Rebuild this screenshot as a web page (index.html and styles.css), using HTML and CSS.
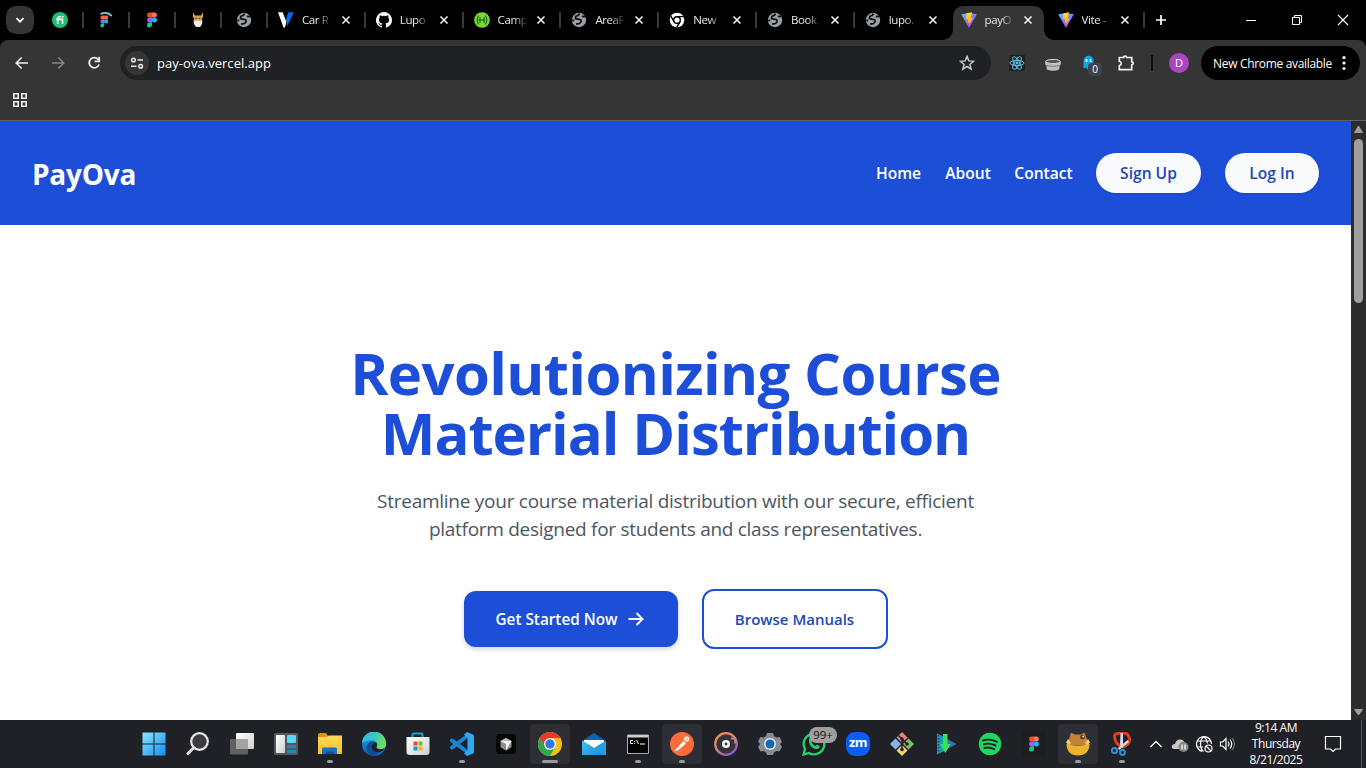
FILE: index.html
```html
<!DOCTYPE html>
<html lang="en">
<head>
<meta charset="utf-8">
<title>payOva</title>
<link rel="stylesheet" href="styles.css">
</head>
<body>
<svg class="defs" width="0" height="0">
  <defs>
    <linearGradient id="viteBody" x1="0" y1="0" x2="0.5" y2="1"><stop offset="0" stop-color="#41d1ff"/><stop offset="1" stop-color="#bd34fe"/></linearGradient>
    <linearGradient id="viteBolt" x1="0" y1="0" x2="0" y2="1"><stop offset="0" stop-color="#ffdd35"/><stop offset="1" stop-color="#ffa800"/></linearGradient>
    <linearGradient id="winBlue" x1="0" y1="0" x2="1" y2="1"><stop offset="0" stop-color="#8be4ff"/><stop offset="1" stop-color="#1190f0"/></linearGradient>
    <linearGradient id="whiteFade" x1="0" y1="0" x2="1" y2="1"><stop offset="0" stop-color="#fff"/><stop offset="1" stop-color="#cfcfcf"/></linearGradient>
    <linearGradient id="folder" x1="0" y1="0" x2="0" y2="1"><stop offset="0" stop-color="#ffd75e"/><stop offset="1" stop-color="#fbbd28"/></linearGradient>
    <linearGradient id="edgeTop" x1="0" y1="0" x2="1" y2="0.4"><stop offset="0" stop-color="#2fb5e8"/><stop offset="0.5" stop-color="#35c6c9"/><stop offset="1" stop-color="#67e05a"/></linearGradient>
    <linearGradient id="edgeLow" x1="0" y1="0" x2="0" y2="1"><stop offset="0" stop-color="#1fa0e5"/><stop offset="1" stop-color="#0b62bd"/></linearGradient>
    <linearGradient id="ring" x1="0" y1="0" x2="0.7" y2="1"><stop offset="0" stop-color="#f08a4a"/><stop offset="0.5" stop-color="#d68a78"/><stop offset="1" stop-color="#8a58d0"/></linearGradient>
    <linearGradient id="mail" x1="0" y1="0" x2="1" y2="1"><stop offset="0" stop-color="#43c4f5"/><stop offset="1" stop-color="#1a8ad6"/></linearGradient>
    <symbol id="globe" viewBox="0 0 16 16"><circle cx="8" cy="8" r="7.2" fill="#9aa0a6"/><path d="M8.600 1.600 7 3.600 4.800 4.300 4.500 6.500 8 7.300l1.800.5.300 2-1.600 1.700-3.500.6M1.200 8.300l2 .3M10.800 4.300l3.200.4" fill="none" stroke="#0c0c0c" stroke-width="1.700"/></symbol>
    <symbol id="vite" viewBox="0 0 16 16"><path d="M.2 2.2 8 .9l7.8 1.3L8 16Z" fill="url(#viteBody)"/><path d="M11 .2 5.4 1.3 5 7.5l2.2-.3L6.8 11l1.6-.5-.3 2.8L11.7 6l-2 .3Z" fill="url(#viteBolt)"/></symbol>
    <symbol id="figma" viewBox="0 0 16 16"><path d="M8 .5H5.6a2.5 2.5 0 0 0 0 5H8Z" fill="#f24e1e"/><path d="M8 .5h2.4a2.5 2.5 0 0 1 0 5H8Z" fill="#ff7262"/><path d="M8 5.5H5.6a2.5 2.5 0 0 0 0 5H8Z" fill="#a259ff"/><circle cx="10.4" cy="8" r="2.5" fill="#1abcfe"/><path d="M8 10.5H5.6A2.5 2.5 0 1 0 8 13Z" fill="#0acf83"/></symbol>
    <symbol id="close" viewBox="0 0 10 10"><path d="m1.5 1.5 7 7m0-7-7 7" stroke="#f1f1f1" stroke-width="1.6"/></symbol>
  </defs>
</svg>
<div class="screen">
  <div class="tabstrip">
    <div class="search-tabs"><svg width="10" height="10" viewBox="0 0 10 10"><path d="m1.5 3.2 3.5 3.5 3.5-3.500" fill="none" stroke="#fff" stroke-width="1.8"/></svg></div>
    <div class="pinned"><svg width="16" height="16" viewBox="0 0 16 16"><circle cx="8" cy="8" r="8" fill="#1dbf73"/><path d="M5.700 12V6.800Q5.700 4.700 7.700 4.700H9M4 7.400h6.500V12" fill="none" stroke="#fff" stroke-width="1.6"/><circle cx="10.6" cy="4.8" r="1" fill="#fff"/></svg></div>
    <div class="pinned"><svg width="16" height="16" viewBox="0 0 16 16"><path d="M2.500 2.200Q9-1.200 13.700 4" fill="none" stroke="#79cfd1" stroke-width="1.9"/><g transform="translate(0 3.200) scale(.78)"><path d="M8 .5H5.600a2.500 2.500 0 0 0 0 5H13V.5Z" fill="#f25f45"/><path d="M8 5.500H5.600a2.500 2.500 0 0 0 0 5H8Z" fill="#a259ff"/><circle cx="10.4" cy="8" r="2.5" fill="#1abcfe"/><path d="M8 10.500H5.600A2.500 2.500 0 1 0 8 13Z" fill="#0acf83"/></g></svg></div>
    <div class="pinned"><svg width="16" height="16"><use href="#figma"/></svg></div>
    <div class="pinned"><svg width="16" height="16" viewBox="0 0 16 16"><path d="M3.200.6 5 3.500h6L12.800.6l.4 4-1.300 2.200H4.100L2.800 4.600Z" fill="#d7a34e"/><path d="M4 5.500h8v5l-4 4-4-4Z" fill="#d9a45c"/><path d="M3.600 8.200 6 9.200l2-1 2 1 2.400-1-.3 3.800-2 3H6l-2-3Z" fill="#f1ece6"/><path d="M5.300 6.300h2m1.400 0h2" stroke="#3a2a1a"/></svg></div>
    <div class="pinned"><svg width="16" height="16"><use href="#globe"/></svg></div>
    <div class="tab"><svg width="16" height="16" viewBox="0 0 16 16"><path d="M0 .2h4.600l3.800 9.600L7 15.400H5.500Z" fill="#fff"/><path d="M10.400.2H16L9.200 14 7.800 8Z" fill="#0868e8"/></svg><span>Car R</span><svg class="x" width="10" height="10"><use href="#close"/></svg></div>
    <div class="tab"><svg width="16" height="16" viewBox="0 0 16 16"><path fill="#fff" d="M8 0a8 8 0 0 0-2.53 15.59c.4.07.55-.17.55-.38v-1.49c-2.23.48-2.7-.95-2.7-.95-.36-.92-.89-1.17-.89-1.17-.72-.5.06-.49.06-.49.8.06 1.23.83 1.23.83.71 1.21 1.87.86 2.33.66.07-.52.28-.87.5-1.07-1.77-.2-3.64-.88-3.64-3.95 0-.88.31-1.59.82-2.15-.08-.2-.36-1.02.08-2.12 0 0 .67-.22 2.2.82a7.7 7.7 0 0 1 4 0c1.53-1.04 2.2-.82 2.2-.82.44 1.1.16 1.92.08 2.12.51.56.82 1.27.82 2.15 0 3.080-1.870 3.750-3.650 3.950.29.25.54.73.54 1.48v2.2c0 .21.15.46.55.38A8 8 0 0 0 8 0Z"/></svg><span>Lupo</span><svg class="x" width="10" height="10"><use href="#close"/></svg></div>
    <div class="tab"><svg width="16" height="16" viewBox="0 0 16 16"><circle cx="8" cy="8" r="7.8" fill="#79dc34"/><path d="M4.500 3.500Q2 8 4.500 12.500M11.500 3.500Q14 8 11.500 12.500M6 5v6m4-6v6M4.500 8h7" fill="none" stroke="#1c5e13" stroke-width="1.1"/></svg><span>Camp</span><svg class="x" width="10" height="10"><use href="#close"/></svg></div>
    <div class="tab"><svg width="16" height="16"><use href="#globe"/></svg><span>AreaF</span><svg class="x" width="10" height="10"><use href="#close"/></svg></div>
    <div class="tab"><svg width="16" height="16" viewBox="0 0 16 16"><circle cx="8" cy="8" r="7.3" fill="#fff"/><circle cx="8" cy="8" r="3.3" fill="#fff" stroke="#000" stroke-width="1.4"/><path d="M8 4.600h6.600M5 9.600 1.800 4M11 9.800 7.700 15.400" stroke="#000" stroke-width="1.4"/></svg><span>New</span><svg class="x" width="10" height="10"><use href="#close"/></svg></div>
    <div class="tab"><svg width="16" height="16"><use href="#globe"/></svg><span>Book</span><svg class="x" width="10" height="10"><use href="#close"/></svg></div>
    <div class="tab last"><svg width="16" height="16"><use href="#globe"/></svg><span>lupo.</span><svg class="x" width="10" height="10"><use href="#close"/></svg></div>
    <div class="tab active"><svg width="16" height="16"><use href="#vite"/></svg><span>payO</span><svg class="x" width="10" height="10"><use href="#close"/></svg></div>
    <div class="tab after"><svg width="16" height="16"><use href="#vite"/></svg><span>Vite -</span><svg class="x" width="10" height="10"><use href="#close"/></svg></div>
    <svg class="newtab" width="12" height="12" viewBox="0 0 12 12"><path d="M6 1v10M1 6h10" stroke="#fff" stroke-width="1.7"/></svg>
    <div class="window-controls">
      <svg width="46" height="40" viewBox="0 0 46 40"><path d="M18 20.500h10" stroke="#fff"/></svg>
      <svg width="46" height="40" viewBox="0 0 46 40"><path d="M18.500 17.500h7v7h-7Zm2-.5v-1.500h7v7h-1.500" fill="none" stroke="#fff"/></svg>
      <svg width="46" height="40" viewBox="0 0 46 40"><path d="m18 15 10 10m0-10L18 25" stroke="#fff" stroke-width="1.1"/></svg>
    </div>
  </div>

  <div class="chrome">
    <div class="toolbar">
      <svg class="tool" width="36" height="34" viewBox="0 0 36 34"><path d="M24 17H12.500m5.200-5.500L12.200 17l5.500 5.500" fill="none" stroke="#f1f1f1" stroke-width="1.6"/></svg>
      <svg class="tool" width="36" height="34" viewBox="0 0 36 34"><path d="M12 17h11.500m-5.200-5.500 5.500 5.500-5.500 5.500" fill="none" stroke="#858585" stroke-width="1.6"/></svg>
      <svg class="tool" width="36" height="34" viewBox="0 0 36 34"><path d="M22.500 13.700a5.100 5.100 0 1 0 .6 4.800M23.200 10.800v4.600h-4.600" fill="none" stroke="#f1f1f1" stroke-width="1.8"/></svg>
      <div class="omnibox">
        <div class="site-info"><svg width="14" height="14" viewBox="0 0 14 14"><circle cx="3.5" cy="4" r="1.8" fill="none" stroke="#e8e8e8" stroke-width="1.5"/><path d="M7.500 4H13M1 10.200h5.500" stroke="#e8e8e8" stroke-width="1.6"/><circle cx="10.7" cy="10.2" r="1.8" fill="none" stroke="#e8e8e8" stroke-width="1.5"/></svg></div>
        <span class="url">pay-ova.vercel.app</span>
        <svg width="16" height="16" viewBox="0 0 16 16"><path d="m8 1.400 1.800 4.500 4.800.4-3.700 3.100 1.200 4.700L8 11.500l-4.100 2.600 1.200-4.700-3.700-3.100 4.800-.4Z" fill="none" stroke="#c7c7c7" stroke-width="1.5"/></svg>
      </div>
      <div class="extensions">
        <svg width="16" height="16" viewBox="0 0 16 16"><path fill="#202124" d="M0 0h16v16H0z"/><g fill="none" stroke="#5ec5df" stroke-width="1"><ellipse cx="8" cy="8" rx="7" ry="2.6"/><ellipse cx="8" cy="8" rx="7" ry="2.6" transform="rotate(60 8 8)"/><ellipse cx="8" cy="8" rx="7" ry="2.6" transform="rotate(120 8 8)"/></g><circle cx="8" cy="8" r="1.4" fill="#5ec5df"/></svg>
        <svg width="16" height="16" viewBox="0 0 16 16"><path d="M.2 6.500h15.600V9.500l-1.200 1-.4 4Q8 17 1.800 14.500l-.4-4-1.200-1Z" fill="#bdbdbd"/><ellipse cx="8" cy="6.500" rx="7.300" ry="2.100" fill="#555" stroke="#d2d2d2"/><path d="M1.500 10.500Q8 12.500 14.500 10.500" fill="none" stroke="#858585"/></svg>
        <div class="ghost"><svg width="16" height="16" viewBox="0 0 16 16"><path d="M2.500 13.600V6a5 5 0 0 1 10-.5V14l-3-1.500-3 2-1.500-2Z" fill="#0aa8ee"/><path d="M5.500 4v3m4-3v3" stroke="#fff" stroke-width="1.500"/></svg><span>0</span></div>
        <svg width="18" height="18" viewBox="0 0 18 18"><path d="M2.300 3.500h4.400a1.500 1.500 0 0 1 3 0h5v4.300a1.500 1.500 0 0 1 0 3v4.900H2.300v-3.900q2-.6 2-2.200t-2-2.300Z" fill="none" stroke="#f2f2f2" stroke-width="1.700"/></svg>
      </div>
      <i class="divider"></i>
      <div class="avatar">D</div>
      <div class="update"><span>New Chrome available</span><svg width="4" height="16" viewBox="0 0 4 16"><circle cx="2" cy="2.500" r="1.600" fill="#fff"/><circle cx="2" cy="8" r="1.600" fill="#fff"/><circle cx="2" cy="13.500" r="1.600" fill="#fff"/></svg></div>
    </div>
    <div class="bookmarks"><svg width="14" height="14" viewBox="0 0 14 14"><path d="M.8.8h4.400v4.400H.8Zm8 0h4.400v4.400H8.800Zm-8 8h4.400v4.400H.8Zm8 0h4.400v4.400H8.800Z" fill="none" stroke="#f1f1f1" stroke-width="1.600"/></svg></div>
  </div>

  <div class="viewport">
    <div class="page">
      <header class="site-header">
        <div class="brand"><span>PayOva</span></div>
        <nav>
          <a class="home">Home</a><a class="about">About</a><a class="contact">Contact</a><a class="pill signup">Sign Up</a><a class="pill login">Log In</a>
        </nav>
      </header>
      <main class="hero">
        <h1><span class="h-a">Revolutionizing Course</span><span class="h-b">Material Distribution</span></h1>
        <p><span class="p-a">Streamline your course material distribution with our secure, efficient</span><span class="p-b">platform designed for students and class representatives.</span></p>
        <div class="actions">
          <a class="primary"><span>Get Started Now</span><svg width="20" height="20" viewBox="0 0 20 20"><path d="M2.500 10h14M10.500 4l6 6-6 6" fill="none" stroke="#fff" stroke-width="2"/></svg></a>
          <a class="secondary">Browse Manuals</a>
        </div>
      </main>
    </div>
    <div class="scrollbar">
      <svg width="15" height="17" viewBox="0 0 15 17"><path d="M7.500 5 11.500 11.500h-8Z" fill="#9f9f9f" stroke="#9f9f9f" stroke-linejoin="round"/></svg>
      <i class="thumb"></i>
      <svg width="15" height="17" viewBox="0 0 15 17"><path d="M3.500 6.500h8L7.500 12Z" fill="#9f9f9f" stroke="#9f9f9f" stroke-linejoin="round"/></svg>
    </div>
  </div>

  <div class="taskbar">
    <div class="apps">
      <div class="app"><svg width="24" height="24" viewBox="0 0 24 24"><path d="M.5.500h11v11H.5Zm12 0h11v11h-11Zm-12 12h11v11H.5Zm12 0h11v11h-11Z" fill="url(#winBlue)"/></svg></div>
      <div class="app"><svg width="24" height="24" viewBox="0 0 24 24"><path d="M7 16.500 2 21.500" stroke="#ddd" stroke-width="3" stroke-linecap="round"/><circle cx="13.500" cy="9.500" r="8.300" fill="#3b3b40" stroke="#e7e7e7" stroke-width="2.200"/></svg></div>
      <div class="app"><svg width="24" height="24" viewBox="0 0 24 24"><rect x="6" y="1" width="18" height="16" rx="1" fill="url(#whiteFade)"/><rect y="7" width="18" height="15.500" rx="1" fill="#606062"/><path d="M6 7h12v10H6Z" fill="#a3a3a3"/></svg></div>
      <div class="app"><svg width="24" height="24" viewBox="0 0 24 24"><rect y="1" width="24" height="22" rx="1.500" fill="#56595c"/><rect x="2" y="3" width="9" height="18" rx="1" fill="url(#whiteFade)"/><rect x="13" y="3" width="9" height="8" rx="1" fill="#55d9f5"/><path d="M13 13h9v3h-9Zm0 5h9v3h-9Z" fill="#2087b8"/></svg></div>
      <div class="app run"><svg width="24" height="24" viewBox="0 0 24 24"><path d="M0 3Q0 1 2 1h6l2 3v3H0Z" fill="#d99511"/><path d="M0 5h9l1.500-1.500H24V21q0 1-1 1H0Z" fill="url(#folder)"/><path d="M4 22v-5q0-1.500 1.500-1.500h12q1.500 0 1.500 1.500v5Z" fill="#1672b8"/><path d="M8 22v-2.500h8V22Z" fill="#095792"/></svg></div>
      <div class="app"><svg width="24" height="24" viewBox="0 0 24 24"><circle cx="12" cy="12" r="12" fill="url(#edgeLow)"/><path d="M0 11A12 12 0 0 1 24 12c0 3.500-2.500 5.200-5.300 5.200-3.200 0-5-1.200-4-2.800 1.600-2.400.5-6-4.400-6.200C5.500 8 1.500 9.500 0 11Z" fill="url(#edgeTop)"/><path d="M10.800 11.900c-2.800 4.400 1 9 6 8.400-2 2.800-5 3.500-7.800 2.900-5.500-2.500-6.500-11-.4-13.500 3-.8 5.500.4 6.200 2-1.200-1.200-3-1-4 .2Z" fill="#104c96"/><path d="M14.700 14.200c-1 1.800 1 3 4 3 1.500 0 2.700-.4 3.800-1.200-1 2.600-3.300 4-5.700 4.300-5 .6-8.800-4-6-8.400 1.600-2.500 5.600-.6 3.900 2.300Z" fill="#202027"/></svg></div>
      <div class="app"><svg width="24" height="24" viewBox="0 0 24 24"><path d="M6.500 6V2.500Q6.500 1.500 7.500 1.500h8q1 0 1 1V6" fill="none" stroke="#1d9fd6" stroke-width="2"/><path d="M.5 5h23v15q0 3-3 3h-17q-3 0-3-3Z" fill="url(#whiteFade)"/><path fill="#e25022" d="M7.500 9.500h4v4h-4z"/><path fill="#7cba28" d="M12.500 9.500h4v4h-4z"/><path fill="#0a9ee0" d="M7.500 14.500h4v4h-4z"/><path fill="#f7b316" d="M12.500 14.500h4v4h-4z"/></svg></div>
      <div class="app run"><svg width="24" height="24" viewBox="0 0 24 24"><path d="M2 8.500 18 20.500M2 15.500 18 3.500" stroke="#1587d0" stroke-width="4" stroke-linecap="round"/><path d="m17 0 6 2.500q1 .5 1 1.500v16q0 1-1 1.500L17 24l-3-2.500 3.500-3.500V6L14 2.500Z" fill="#31a8f2"/></svg></div>
      <div class="app"><svg width="20" height="20" viewBox="0 0 20 20"><rect width="20" height="20" rx="4" fill="#050505"/><path d="m10 4 5.500 3v6.300L10 16.500l-5.500-3.200V7Z" fill="#8d8d8d"/><path d="M4.500 7h11L10 16.500V10Z" fill="#f3f3f3"/><path d="m10 4 5.500 3h-11Z" fill="#b9b9b9"/></svg></div>
      <div class="app tile wide-run"><svg width="24" height="24" viewBox="0 0 24 24"><circle cx="12" cy="12" r="12" fill="#fbc116"/><path d="M1.600 6A12 12 0 0 1 22.400 6H12L7 15Z" fill="#e33b2e"/><path d="M1.600 6A12 12 0 0 0 12 24l5.200-9H7Z" fill="#2da94f"/><circle cx="12" cy="12" r="6" fill="#fff"/><circle cx="12" cy="12" r="4.700" fill="#3478e5"/></svg></div>
      <div class="app"><svg width="24" height="24" viewBox="0 0 24 24"><path d="M0 9 12 1l12 8H0Z" fill="#0c64ae"/><path d="M2 8h20v9H2Z" fill="#fff"/><path d="M0 8.500 12 16 24 8.500V23H0Z" fill="#249de2"/><path d="M0 8.500 20 21l4 2H0Z" fill="url(#mail)"/></svg></div>
      <div class="app run"><svg width="24" height="24" viewBox="0 0 24 24"><path d="M1.500 3h21v18.500h-21Z" fill="#050505" stroke="#a8aab0"/><path d="M2 3h20v2.500H2Z" fill="#cdd1d8"/><path d="M7 8.500H4.500v3H7M8.500 9v.8m0 1.200v.8M10.500 8l2 4m1.500 0h5" fill="none" stroke="#fff"/></svg></div>
      <div class="app tile run"><svg width="24" height="24" viewBox="0 0 24 24"><circle cx="12" cy="12" r="12" fill="#ff6c37"/><path d="m4.500 19.500 2-3 7-7.500 2.500 2.500-7.500 6.500Z" fill="#fff"/><circle cx="16.600" cy="7" r="2.600" fill="#fff"/><path d="m15.500 8.500 2.500-2" stroke="#ff6c37"/></svg></div>
      <div class="app"><svg width="24" height="24" viewBox="0 0 24 24"><circle cx="12" cy="12" r="10.800" fill="#33343c" stroke="url(#ring)" stroke-width="2.200"/><circle cx="12" cy="12" r="4" fill="#fff"/><circle cx="12" cy="12" r="1.400" fill="#33343c"/><path d="M17 6.500h4v5" fill="none" stroke="#cf7f78" stroke-width="1.800"/></svg></div>
      <div class="app"><svg width="24" height="24" viewBox="0 0 24 24"><path d="m9 1 6 0 1 3 2.500 1.400L21.600 5 24 10l-2 2 2 3-2.600 4.500-3-.5L16 20.500 15 23H9l-1-2.500L5.500 19l-3 .5L0 15l2-3-2-2.500L2.500 5l3 .5L8 4Z" fill="#858c94"/><circle cx="12" cy="12" r="6" fill="#e8eef4"/><circle cx="12" cy="12" r="4.500" fill="#1769ae"/></svg></div>
      <div class="app whatsapp"><svg width="24" height="24" viewBox="0 0 24 24"><path d="M1.500 22.500 3 17A10.300 10.300 0 1 1 7 21Z" fill="#202027" stroke="#25d366" stroke-width="2.300"/><path d="M7 7.500C7.500 5.500 9.500 5.500 10 7l.7 1.500-1.200 1.800q1.300 2.700 4 3.800l1.700-1.300 2.600 1.300q-.5 3.400-3.700 3C10 16.500 6.500 12.500 7 7.500Z" fill="#25d366"/></svg><span class="badge">99+</span></div>
      <div class="app"><div class="zoom">zm</div></div>
      <div class="app"><svg width="24" height="24" viewBox="0 0 24 24"><path d="m12 0 5.500 5.500L12 11 6.500 5.500Z" fill="#e98080"/><path d="m5.500 6.500 5.500 5.500-5.500 5.500L0 12Z" fill="#86b7e8"/><path d="m18.500 6.500 5.500 5.500-5.500 5.500-5.500-5.500Z" fill="#80bd68"/><path d="m12 13 5.500 5.500L12 24l-5.500-5.500Z" fill="#f4d266"/><path d="M8.500 3.500 12 7v12m0-12 5 5" fill="none" stroke="#202027" stroke-width="1.500"/><circle cx="12" cy="7" r="1.700" fill="#202027"/><circle cx="12" cy="17.500" r="1.800" fill="#202027"/><circle cx="17" cy="12" r="1.800" fill="#202027"/></svg></div>
      <div class="app"><svg width="24" height="24" viewBox="0 0 24 24"><path d="M3 1.500 22.500 12 3 22.500Z" fill="#3275b8"/><path d="M3 1.500 12 6v12l-9 4.500Z" fill="#159bb5"/><path d="M4.500 3v18" stroke="#1d416f" stroke-width="1.300" stroke-dasharray="1.500 1.500"/><path d="M9 2h4.500v10h3.200l-5.400 9L6 12h3Z" fill="#38df60"/></svg></div>
      <div class="app"><svg width="24" height="24" viewBox="0 0 24 24"><circle cx="12" cy="12" r="11.200" fill="#1ed760"/><path d="M5 8.500q7-2.200 14 1.300M5.700 12.300q6.300-1.800 12 1.300M6.300 16q5-1.400 10 1.200" fill="none" stroke="#202027" stroke-width="1.900" stroke-linecap="round"/></svg></div>
      <div class="app"><div class="figma-box"><svg width="16" height="16"><use href="#figma"/></svg></div></div>
      <div class="app tile run"><svg width="24" height="24" viewBox="0 0 24 24"><path d="M3 7 5 .8l4 1.800h6l3.500-2 2.300 6.400 3 6H.5Z" fill="#c78134"/><path d="M.5 12q11.500 3 23 0c0 7-4 11.500-11.500 11.500S.5 19 .5 12Z" fill="#edb329"/><path d="M2 7 0 10.500 3 13l2-2Z" fill="#e8d36c"/><path d="m22 7 2 3.500-3 2.500-2-2Z" fill="#e8d36c"/><circle cx="16.500" cy="5" r="2.300" fill="#542d1b"/><circle cx="17.200" cy="4.500" r="1" fill="#fff"/></svg></div>
      <div class="app run"><svg width="24" height="24" viewBox="0 0 24 24"><path d="M4.500 2.500Q19-2.500 19.500 7.500q0 5.500-7 7.500Q4 12 4.500 2.500" fill="none" stroke="#dc3f1d" stroke-width="3"/><path d="M10.500 1h2.500v15l-3-3Zm7 7 1.500 2L9 18l-1-2Z" fill="#d8dadd"/><circle cx="4.500" cy="18.500" r="2.600" fill="none" stroke="#2b91d2" stroke-width="2"/><circle cx="12.500" cy="20.500" r="2.400" fill="none" stroke="#2b91d2" stroke-width="2"/></svg></div>
    </div>
    <div class="tray">
      <svg width="24" height="24" viewBox="0 0 24 24"><path d="m6.500 15 5.500-5.500 5.500 5.500" fill="none" stroke="#fff" stroke-width="1.300"/></svg>
      <svg width="24" height="24" viewBox="0 0 24 24"><path d="M6 17q-3-.5-2-3.500 1-2 3-1.500 1-4.500 5-4.500 4 0 4.500 4 3 .5 3 3T17 17Z" fill="#c8c8c8"/><circle cx="15.500" cy="15" r="5" fill="#858585"/><path d="M14 12.500v5m3-5v5" stroke="#fff" stroke-width="1.300"/></svg>
      <svg width="24" height="24" viewBox="0 0 24 24"><g fill="none" stroke="#fff" stroke-width="1.200"><path d="M10 19.300A7.500 7.500 0 1 1 19.500 12M5 9h14M5 15h6M12 4.500Q8.500 7 8.500 12t3 7.500M12 4.500q3 2.500 3.500 7"/><circle cx="16.500" cy="16.500" r="3.500"/><path d="m14 14 5 5"/></g></svg>
      <svg width="24" height="24" viewBox="0 0 24 24"><g fill="none" stroke="#fff" stroke-width="1.200"><path d="M4.500 10h2.200L10 6.500v11L6.700 14H4.500Z"/><path d="M12 9.500q2 2.500 0 5M14 7.500q3.500 4.500 0 9"/><path d="M16.200 6q4.500 6 0 12" stroke="#777"/></g></svg>
    </div>
    <div class="clock"><span>9:14 AM</span><span>Thursday</span><span>8/21/2025</span></div>
    <svg class="note" width="18" height="18" viewBox="0 0 18 18"><path d="M1.500 1.500h15v12.500h-5L9 16.500 6.500 14h-5Z" fill="none" stroke="#fff" stroke-width="1.200"/></svg>
    <i class="desktop-edge"></i>
  </div>
</div>
</body>
</html>
```
FILE: styles.css
```css
* { box-sizing: border-box; }
body { margin: 0; font-family: "Open Sans", "Noto Sans", sans-serif; }
svg { display: block; flex: none; }
.defs { position: absolute; }
.screen { width: 1366px; height: 768px; overflow: hidden; display: flex; flex-direction: column; background: #000; }

/* Tab strip */
.tabstrip { height: 40px; flex: none; display: flex; align-items: center; background: #000; color: #e8e8e8; font-size: 12px; }
.search-tabs { width: 28px; height: 28px; margin: 0 4px 0 6px; border-radius: 10px; background: #353535; display: grid; place-items: center; }
.pinned { width: 46px; height: 16px; display: flex; justify-content: center; border-right: 2px solid #3a3a3a; }
.pinned svg, .tab svg { overflow: visible; }
.tab { width: 97.8px; height: 16px; display: flex; align-items: center; padding: 0 13px 0 10px; border-right: 2px solid #3a3a3a; }
.tab span { min-width: 27px; margin-left: 8px; white-space: nowrap; font-size: 11.5px; letter-spacing: -0.4px; line-height: 16px; -webkit-mask-image: linear-gradient(90deg, #000 16px, transparent 30px); mask-image: linear-gradient(90deg, #000 16px, transparent 30px); }
.tab .x { margin-left: auto; }
.tab.last { border-color: transparent; }
.tab.active { position: relative; width: 91px; height: 34px; margin: 6px 0 0; padding: 0 11px 6px 8px; border: 0; border-radius: 10px 10px 0 0; background: #353535; }
.tab.active::before, .tab.active::after { content: ""; position: absolute; bottom: 0; width: 10px; height: 10px; }
.tab.active::before { left: -10px; background: radial-gradient(circle at 0 0, transparent 9.5px, #353535 10px); }
.tab.active::after { right: -10px; background: radial-gradient(circle at 100% 0, transparent 9.5px, #353535 10px); }
.tab.after { width: 101px; padding: 0 13px 0 14px; }
.newtab { margin-left: 10px; }
.window-controls { display: flex; margin-left: auto; }

/* Browser toolbar */
.chrome { height: 81px; flex: none; background: #353535; border-bottom: 1px solid #626262; border-radius: 8px 8px 0 0; }
.toolbar { height: 46px; display: flex; align-items: center; padding: 0 6px 0 4px; }
.omnibox { width: 871px; height: 34px; margin-left: 8px; border-radius: 17px; background: #202124; color: #fff; display: flex; align-items: center; padding: 0 16px 0 5px; }
.site-info { width: 24px; height: 24px; border-radius: 50%; background: #353535; display: grid; place-items: center; }
.url { flex: 1; margin-left: 8px; font-size: 13px; letter-spacing: 0.04px; }
.extensions { display: flex; align-items: center; margin-left: 18px; gap: 20px; }
.ghost { position: relative; }
.ghost span { position: absolute; left: 7px; top: 8px; width: 14px; height: 13px; border-radius: 4px; background: #414349; color: #fff; font-size: 10px; line-height: 13px; text-align: center; }
.divider { width: 2px; height: 16px; margin-left: 16px; background: #111; }
.avatar { width: 20px; height: 20px; margin-left: 16px; border-radius: 50%; background: #ab47bc; color: #fff; font-size: 11px; line-height: 20px; text-align: center; }
.update { width: 159px; height: 34px; margin-left: auto; border-radius: 17px; background: #000; color: #fff; font-size: 12px; display: flex; align-items: center; justify-content: space-between; padding: 0 14px 0 12px; }
.update span { letter-spacing: -0.32px; white-space: nowrap; }
.bookmarks { padding: 7px 13px; }

/* Page */
.viewport { height: 599px; flex: none; display: flex; }
.page { width: 1351px; background: #fff; }
.site-header { height: 104px; padding: 0 32px; background: #1d4ed8; color: #fff; display: flex; align-items: center; justify-content: space-between; }
.brand { font-size: 28px; font-weight: 700; letter-spacing: -0.25px; line-height: 36px; padding-top: 2px; }
nav { display: flex; align-items: center; gap: 24px; font-size: 15.6px; font-weight: 600; white-space: nowrap; }
nav a { display: flex; justify-content: center; line-height: 40px; }
.home { width: 45px; }
.about { width: 46px; }
.contact { width: 57px; }
.pill { height: 40px; border-radius: 20px; background: #f9fafb; color: #2148b8; box-shadow: 0 1px 2px rgba(0, 0, 0, .12); }
.pill.signup { width: 105px; }
.pill.login { width: 94px; }
.hero { padding-top: 118px; text-align: center; white-space: nowrap; }
h1 { margin: 0; font-size: 58px; line-height: 60px; font-weight: 700; color: #1d4ed8; }
h1 span, .hero p span { display: block; }
.h-a { letter-spacing: -0.62px; }
.h-b { letter-spacing: -1.05px; }
.hero p { margin: 24px 0 0; font-size: 19px; line-height: 28px; color: #4b5563; }
.p-a { letter-spacing: -0.26px; }
.p-b { letter-spacing: -0.28px; }
.actions { margin-top: 46px; display: flex; justify-content: center; align-items: center; gap: 24px; font-size: 15px; font-weight: 600; }
.primary { width: 214px; height: 56px; display: flex; align-items: center; justify-content: center; gap: 8px; border-radius: 12px; background: #1d4ed8; color: #fff; box-shadow: 0 2px 5px rgba(0, 0, 0, .18); }
.primary span { font-size: 15.3px; }
.secondary { width: 186px; height: 60px; border: 2px solid #1d4ed8; border-radius: 12px; line-height: 56px; color: #2148b8; }
.scrollbar { width: 15px; background: #2c2c2c; display: flex; flex-direction: column; align-items: center; }
.thumb { width: 9px; height: 164px; margin: 1px 0 auto; border-radius: 5px; background: #9f9f9f; }

/* Taskbar */
.taskbar { height: 48px; flex: none; display: flex; align-items: center; background: #202027; color: #fff; padding-left: 132px; }
.apps { display: flex; }
.app { position: relative; width: 44px; height: 48px; display: grid; place-items: center; }
.app svg { position: relative; z-index: 1; }
.app.tile::before { content: ""; position: absolute; inset: 4px 2px; border-radius: 4px; background: #2e2e36; }
.app.run::after, .app.wide-run::after { content: ""; position: absolute; bottom: 5px; left: 19px; width: 6px; height: 3px; border-radius: 2px; background: #9b9b9f; }
.app.wide-run::after { left: 14px; width: 16px; }
.badge { position: absolute; z-index: 2; left: 17px; top: 7px; width: 28px; height: 16px; border-radius: 8px; background: #9f9f9f; color: #111; font-size: 11.5px; line-height: 15px; text-align: center; }
.zoom { width: 24px; height: 24px; border-radius: 9px; background: #0b5cff; font-size: 13px; font-weight: 700; line-height: 21px; text-align: center; letter-spacing: -0.6px; }
.figma-box { width: 24px; height: 24px; display: grid; place-items: center; background: #1e1e1e; }
.tray { display: flex; }
.clock { width: 70px; display: flex; flex-direction: column; font-size: 12px; line-height: 16px; text-align: center; letter-spacing: -0.45px; margin-left: 1px; }
.note { margin-left: 13px; }
.desktop-edge { width: 1px; height: 48px; margin-left: 19px; background: #55555a; }
```
